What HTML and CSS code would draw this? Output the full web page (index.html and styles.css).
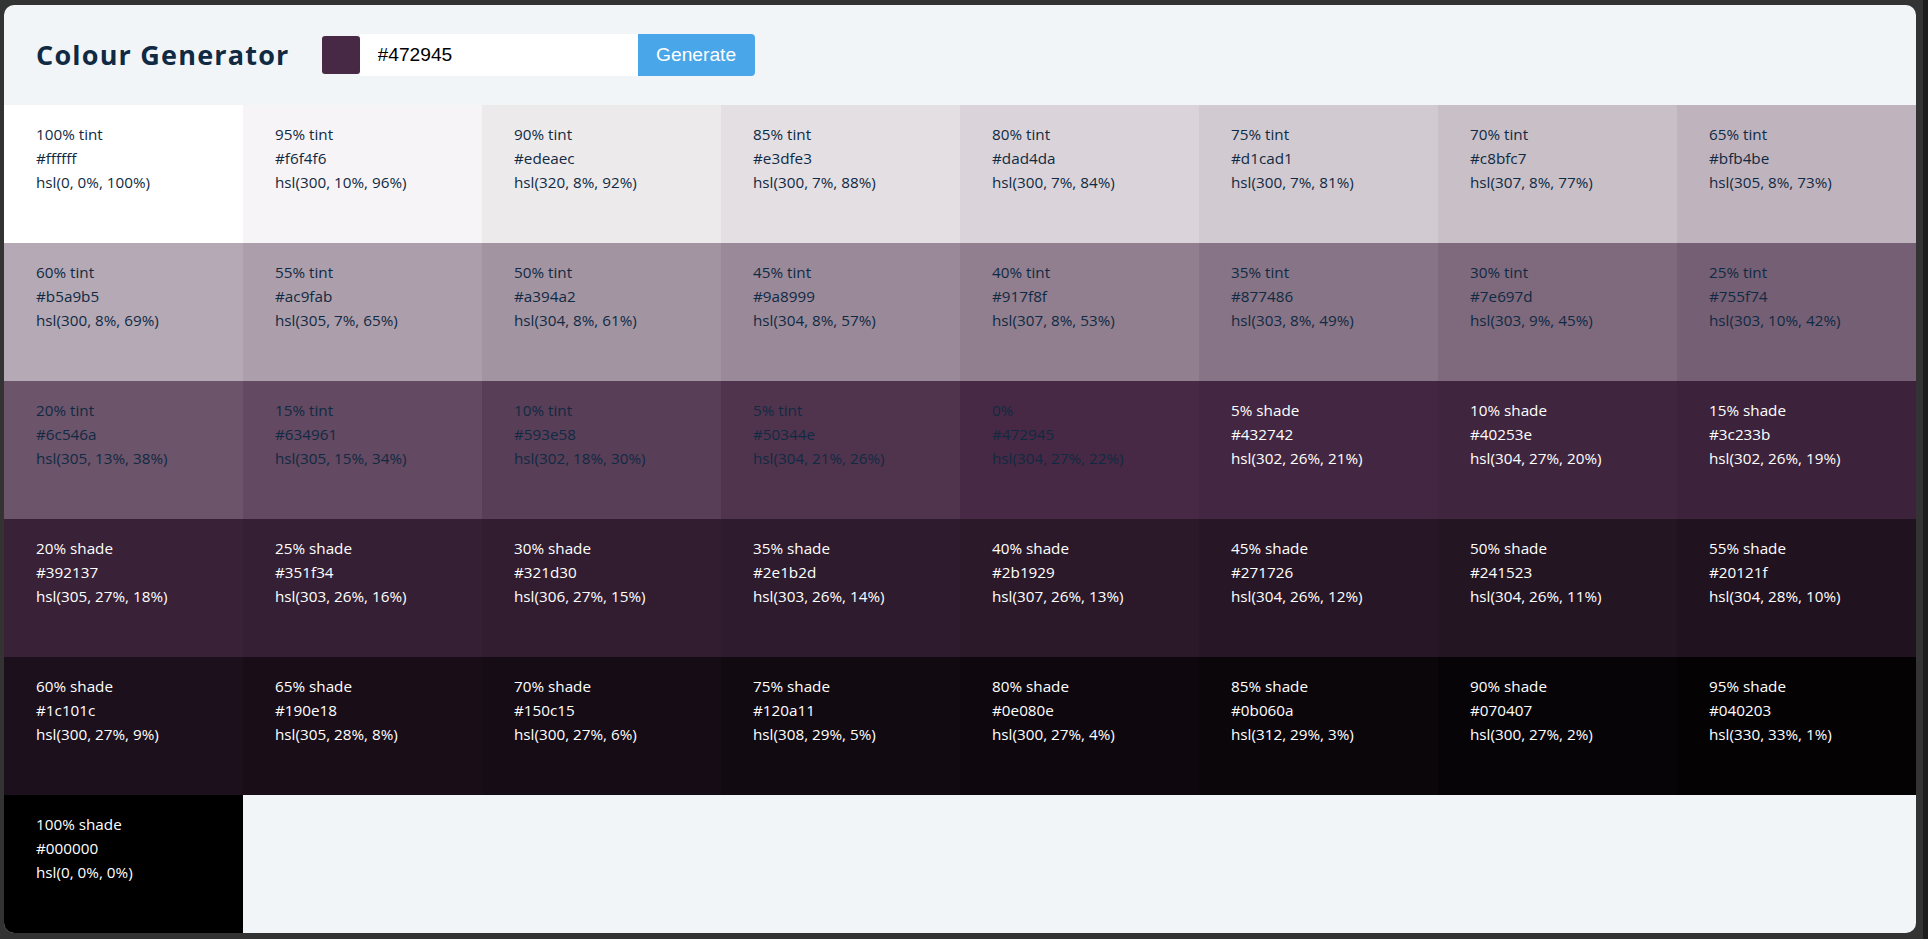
FILE: index.html
```html
<!DOCTYPE html>
<html lang="en">
<head>
<meta charset="utf-8">
<title>Colour Generator</title>
<link rel="stylesheet" href="styles.css">
</head>
<body>
<div class="frame">
  <main class="page">
    <section class="container">
      <h3 class="title">Colour Generator</h3>
      <form class="picker">
        <span class="swatch"></span>
        <input class="hex-input" type="text" value="#472945">
        <button class="btn" type="button">Generate</button>
      </form>
    </section>
    <section class="colors">
      <article class="color" style="background:#ffffff"><p class="percent">100% tint</p><p class="value">#ffffff</p><p class="value">hsl(0, 0%, 100%)</p></article>
      <article class="color" style="background:#f6f4f6"><p class="percent">95% tint</p><p class="value">#f6f4f6</p><p class="value">hsl(300, 10%, 96%)</p></article>
      <article class="color" style="background:#edeaec"><p class="percent">90% tint</p><p class="value">#edeaec</p><p class="value">hsl(320, 8%, 92%)</p></article>
      <article class="color" style="background:#e3dfe3"><p class="percent">85% tint</p><p class="value">#e3dfe3</p><p class="value">hsl(300, 7%, 88%)</p></article>
      <article class="color" style="background:#dad4da"><p class="percent">80% tint</p><p class="value">#dad4da</p><p class="value">hsl(300, 7%, 84%)</p></article>
      <article class="color" style="background:#d1cad1"><p class="percent">75% tint</p><p class="value">#d1cad1</p><p class="value">hsl(300, 7%, 81%)</p></article>
      <article class="color" style="background:#c8bfc7"><p class="percent">70% tint</p><p class="value">#c8bfc7</p><p class="value">hsl(307, 8%, 77%)</p></article>
      <article class="color" style="background:#bfb4be"><p class="percent">65% tint</p><p class="value">#bfb4be</p><p class="value">hsl(305, 8%, 73%)</p></article>

      <article class="color" style="background:#b5a9b5"><p class="percent">60% tint</p><p class="value">#b5a9b5</p><p class="value">hsl(300, 8%, 69%)</p></article>
      <article class="color" style="background:#ac9fab"><p class="percent">55% tint</p><p class="value">#ac9fab</p><p class="value">hsl(305, 7%, 65%)</p></article>
      <article class="color" style="background:#a394a2"><p class="percent">50% tint</p><p class="value">#a394a2</p><p class="value">hsl(304, 8%, 61%)</p></article>
      <article class="color" style="background:#9a8999"><p class="percent">45% tint</p><p class="value">#9a8999</p><p class="value">hsl(304, 8%, 57%)</p></article>
      <article class="color" style="background:#917f8f"><p class="percent">40% tint</p><p class="value">#917f8f</p><p class="value">hsl(307, 8%, 53%)</p></article>
      <article class="color" style="background:#877486"><p class="percent">35% tint</p><p class="value">#877486</p><p class="value">hsl(303, 8%, 49%)</p></article>
      <article class="color" style="background:#7e697d"><p class="percent">30% tint</p><p class="value">#7e697d</p><p class="value">hsl(303, 9%, 45%)</p></article>
      <article class="color" style="background:#755f74"><p class="percent">25% tint</p><p class="value">#755f74</p><p class="value">hsl(303, 10%, 42%)</p></article>

      <article class="color" style="background:#6c546a"><p class="percent">20% tint</p><p class="value">#6c546a</p><p class="value">hsl(305, 13%, 38%)</p></article>
      <article class="color" style="background:#634961"><p class="percent">15% tint</p><p class="value">#634961</p><p class="value">hsl(305, 15%, 34%)</p></article>
      <article class="color" style="background:#593e58"><p class="percent">10% tint</p><p class="value">#593e58</p><p class="value">hsl(302, 18%, 30%)</p></article>
      <article class="color" style="background:#50344e"><p class="percent">5% tint</p><p class="value">#50344e</p><p class="value">hsl(304, 21%, 26%)</p></article>
      <article class="color" style="background:#472945"><p class="percent">0%</p><p class="value">#472945</p><p class="value">hsl(304, 27%, 22%)</p></article>
      <article class="color light" style="background:#432742"><p class="percent">5% shade</p><p class="value">#432742</p><p class="value">hsl(302, 26%, 21%)</p></article>
      <article class="color light" style="background:#40253e"><p class="percent">10% shade</p><p class="value">#40253e</p><p class="value">hsl(304, 27%, 20%)</p></article>
      <article class="color light" style="background:#3c233b"><p class="percent">15% shade</p><p class="value">#3c233b</p><p class="value">hsl(302, 26%, 19%)</p></article>

      <article class="color light" style="background:#392137"><p class="percent">20% shade</p><p class="value">#392137</p><p class="value">hsl(305, 27%, 18%)</p></article>
      <article class="color light" style="background:#351f34"><p class="percent">25% shade</p><p class="value">#351f34</p><p class="value">hsl(303, 26%, 16%)</p></article>
      <article class="color light" style="background:#321d30"><p class="percent">30% shade</p><p class="value">#321d30</p><p class="value">hsl(306, 27%, 15%)</p></article>
      <article class="color light" style="background:#2e1b2d"><p class="percent">35% shade</p><p class="value">#2e1b2d</p><p class="value">hsl(303, 26%, 14%)</p></article>
      <article class="color light" style="background:#2b1929"><p class="percent">40% shade</p><p class="value">#2b1929</p><p class="value">hsl(307, 26%, 13%)</p></article>
      <article class="color light" style="background:#271726"><p class="percent">45% shade</p><p class="value">#271726</p><p class="value">hsl(304, 26%, 12%)</p></article>
      <article class="color light" style="background:#241523"><p class="percent">50% shade</p><p class="value">#241523</p><p class="value">hsl(304, 26%, 11%)</p></article>
      <article class="color light" style="background:#20121f"><p class="percent">55% shade</p><p class="value">#20121f</p><p class="value">hsl(304, 28%, 10%)</p></article>

      <article class="color light" style="background:#1c101c"><p class="percent">60% shade</p><p class="value">#1c101c</p><p class="value">hsl(300, 27%, 9%)</p></article>
      <article class="color light" style="background:#190e18"><p class="percent">65% shade</p><p class="value">#190e18</p><p class="value">hsl(305, 28%, 8%)</p></article>
      <article class="color light" style="background:#150c15"><p class="percent">70% shade</p><p class="value">#150c15</p><p class="value">hsl(300, 27%, 6%)</p></article>
      <article class="color light" style="background:#120a11"><p class="percent">75% shade</p><p class="value">#120a11</p><p class="value">hsl(308, 29%, 5%)</p></article>
      <article class="color light" style="background:#0e080e"><p class="percent">80% shade</p><p class="value">#0e080e</p><p class="value">hsl(300, 27%, 4%)</p></article>
      <article class="color light" style="background:#0b060a"><p class="percent">85% shade</p><p class="value">#0b060a</p><p class="value">hsl(312, 29%, 3%)</p></article>
      <article class="color light" style="background:#070407"><p class="percent">90% shade</p><p class="value">#070407</p><p class="value">hsl(300, 27%, 2%)</p></article>
      <article class="color light" style="background:#040203"><p class="percent">95% shade</p><p class="value">#040203</p><p class="value">hsl(330, 33%, 1%)</p></article>

      <article class="color light" style="background:#000000"><p class="percent">100% shade</p><p class="value">#000000</p><p class="value">hsl(0, 0%, 0%)</p></article>
    </section>
  </main>
</div>
</body>
</html>
```

FILE: styles.css
```css
* { box-sizing: border-box; }

html, body {
  margin: 0;
  height: 100%;
}

body {
  background: linear-gradient(to right, #333333 0, #333333 1923px, #1c1c1c 1923px);
  font-family: "Open Sans", "Noto Sans", sans-serif;
  color: #102a43;
  overflow: hidden;
}

.frame {
  height: 939px;
  padding: 5px 12px 6px 4px;
}

.page {
  height: 100%;
  background: #f1f5f8;
  border-radius: 10px;
  overflow: hidden;
  display: flex;
  flex-direction: column;
}

.container {
  height: 100px;
  flex: none;
  display: flex;
  align-items: center;
  padding-left: 32px;
}

.title {
  margin: 0 32px 0 0;
  font-size: 27px;
  font-weight: 700;
  letter-spacing: 1.2px;
  color: #102a43;
  line-height: 1.25;
}

.picker {
  display: flex;
  align-items: center;
  margin: 0;
}

.swatch {
  width: 38px;
  height: 38px;
  background: #472945;
  border-radius: 3px;
}

.hex-input {
  width: 278px;
  height: 42px;
  border: 2px solid transparent;
  background: #ffffff;
  padding: 8px 16px;
  font-family: "Liberation Sans", Arial, sans-serif;
  font-size: 19.2px;
  color: #000;
  outline: none;
}

.btn {
  width: 117px;
  height: 42px;
  border: 2px solid transparent;
  background: #49a6e9;
  color: #ffffff;
  font-family: "Liberation Sans", Arial, sans-serif;
  font-size: 19.2px;
  padding: 8px 16px;
  border-radius: 0 4px 4px 0;
}

.colors {
  flex: 1;
  display: grid;
  grid-template-columns: repeat(8, 1fr);
  grid-template-rows: repeat(6, 1fr);
}

.color {
  padding: 17px 32px 16px;
  font-size: 15.25px;
  line-height: 24px;
  color: #102a43;
}

.color p {
  margin: 0;
}

.color.light {
  color: #ffffff;
}
```
